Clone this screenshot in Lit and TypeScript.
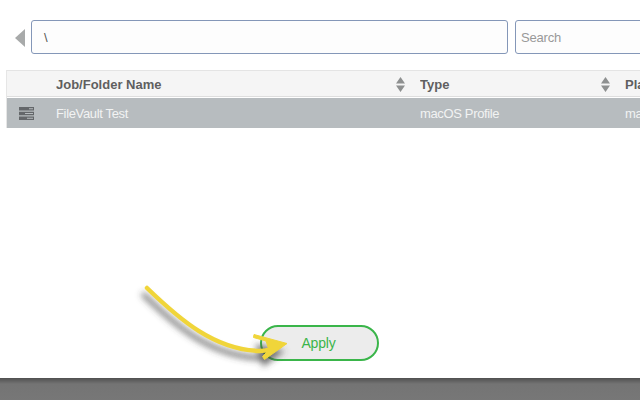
import { LitElement, html, css, svg } from "lit";
import { customElement } from "lit/decorators.js";

const sortIcon = html`<svg class="sort" width="9" height="15" viewBox="0 0 9 15"><path d="M4.5 0 L9 6.5 H0 Z M0 8.5 H9 L4.5 15 Z" fill="#8e9090"/></svg>`;

@customElement("app-root")
export class AppRoot extends LitElement {
  static styles = css`
    :host { display: block; width: 640px; height: 400px; overflow: hidden; background: #fff; font-family: "Liberation Sans", Arial, sans-serif; }
    .page { position: relative; display: flex; flex-direction: column; height: 400px; overflow: hidden; }
    .top { display: flex; align-items: center; padding: 20px 0 0 15px; height: 34px; }
    .back { width: 0; height: 0; border-style: solid; border-width: 9px 10px 9px 0; border-color: transparent #a8aaaa transparent transparent; margin: 2px 6px 0 0; flex: none; }
    .field { box-sizing: border-box; height: 34px; border: 1px solid #8497b8; border-radius: 3px; background: #fdfdfd; display: flex; align-items: center; font-size: 13px; color: #555; flex: none; }
    .path { width: 477px; padding-left: 12px; margin-right: 7px; }
    .search { width: 160px; padding-left: 5px; color: #999; letter-spacing: -0.2px; }
    .table { margin: 16px 0 0 6px; width: 660px; border-left: 1px solid #e6e6e6; flex: none; }
    .row { display: grid; grid-template-columns: 49px 364px 205px 1fr; align-items: center; font-size: 13px; }
    .head { height: 27px; box-sizing: border-box; padding-top: 1px; background: #f5f5f5; border-top: 1px solid #e4e4e4; border-bottom: 1px solid #dedede; font-weight: bold; color: #5f5f5f; }
    .body { height: 30px; margin-top: 1px; background: #b7bcbf; color: #f2f3f3; letter-spacing: -0.35px; font-size: 13px; }
    .cell { display: flex; align-items: center; justify-content: space-between; padding-right: 15px; white-space: nowrap; overflow: hidden; }
    .sort { flex: none; }
    .ico { display: flex; padding-left: 12px; }
    .spacer { flex: 1; }
    .actions { display: flex; padding: 0 0 17px 260px; }
    .apply { box-sizing: border-box; width: 119px; height: 36px; border: 2px solid #3ab54a; border-radius: 18px; background: #ececec; color: #3ab54a; font: 14px "Liberation Sans", Arial, sans-serif; letter-spacing: -0.2px; padding: 0 2px 0 0; }
    .footer { height: 22px; flex: none; background: linear-gradient(#505050, #747474 6px, #777); }
    .arrow { position: absolute; left: 130px; top: 275px; overflow: visible; pointer-events: none; }
  `;

  render() {
    return html`<div class="page">
      <div class="top">
        <div class="back"></div>
        <div class="field path">\\</div>
        <div class="field search">Search</div>
      </div>
      <div class="table">
        <div class="row head">
          <div></div>
          <div class="cell"><span>Job/Folder Name</span>${sortIcon}</div>
          <div class="cell"><span>Type</span>${sortIcon}</div>
          <div class="cell"><span>Platform</span></div>
        </div>
        <div class="row body">
          <div class="ico">
            <svg width="15" height="13" viewBox="0 0 15 13">
              <rect y="0" width="15" height="3.5" fill="#64676a"/><rect x="10" y="1.25" width="4" height="1" fill="#b7bcbf"/>
              <rect y="4.75" width="15" height="3.5" fill="#64676a"/><rect x="6" y="6" width="8" height="1" fill="#b7bcbf"/>
              <rect y="9.5" width="15" height="3.5" fill="#64676a"/><rect x="8" y="10.75" width="6" height="1" fill="#b7bcbf"/>
            </svg>
          </div>
          <div class="cell"><span>FileVault Test</span></div>
          <div class="cell"><span>macOS Profile</span></div>
          <div class="cell"><span>macOS</span></div>
        </div>
      </div>
      <div class="spacer"></div>
      <div class="actions"><button class="apply">Apply</button></div>
      <div class="footer"></div>
      <svg class="arrow" width="260" height="125" viewBox="0 0 260 125">
        <defs><filter id="s" x="-20%" y="-40%" width="140%" height="180%"><feGaussianBlur stdDeviation="3"/></filter></defs>
        ${svg`<g transform="translate(-3 7)" filter="url(#s)" fill="#444" fill-opacity="0.7" stroke="#444" stroke-opacity="0.7" stroke-width="5" stroke-linecap="round">
          <path fill="none" d="M17 13 C50 45 85 75 135 76"/>
          <path stroke="none" d="M128 62 L158 69 L136 85 Z"/>
        </g>
        <path d="M17 13 C50 45 85 75 130 76 C137 76 143 74 150 71" fill="none" stroke="#f0d53a" stroke-width="4.5" stroke-linecap="round"/>
        <path d="M124 59.5 L157 68.5 L134.5 84.5 L132.5 81.5 L139 75 L136 66 L123.5 62.5 Z" fill="#f0d53a" stroke="#f0d53a" stroke-width="1" stroke-linejoin="round"/>`}
      </svg>
    </div>`;
  }
}
